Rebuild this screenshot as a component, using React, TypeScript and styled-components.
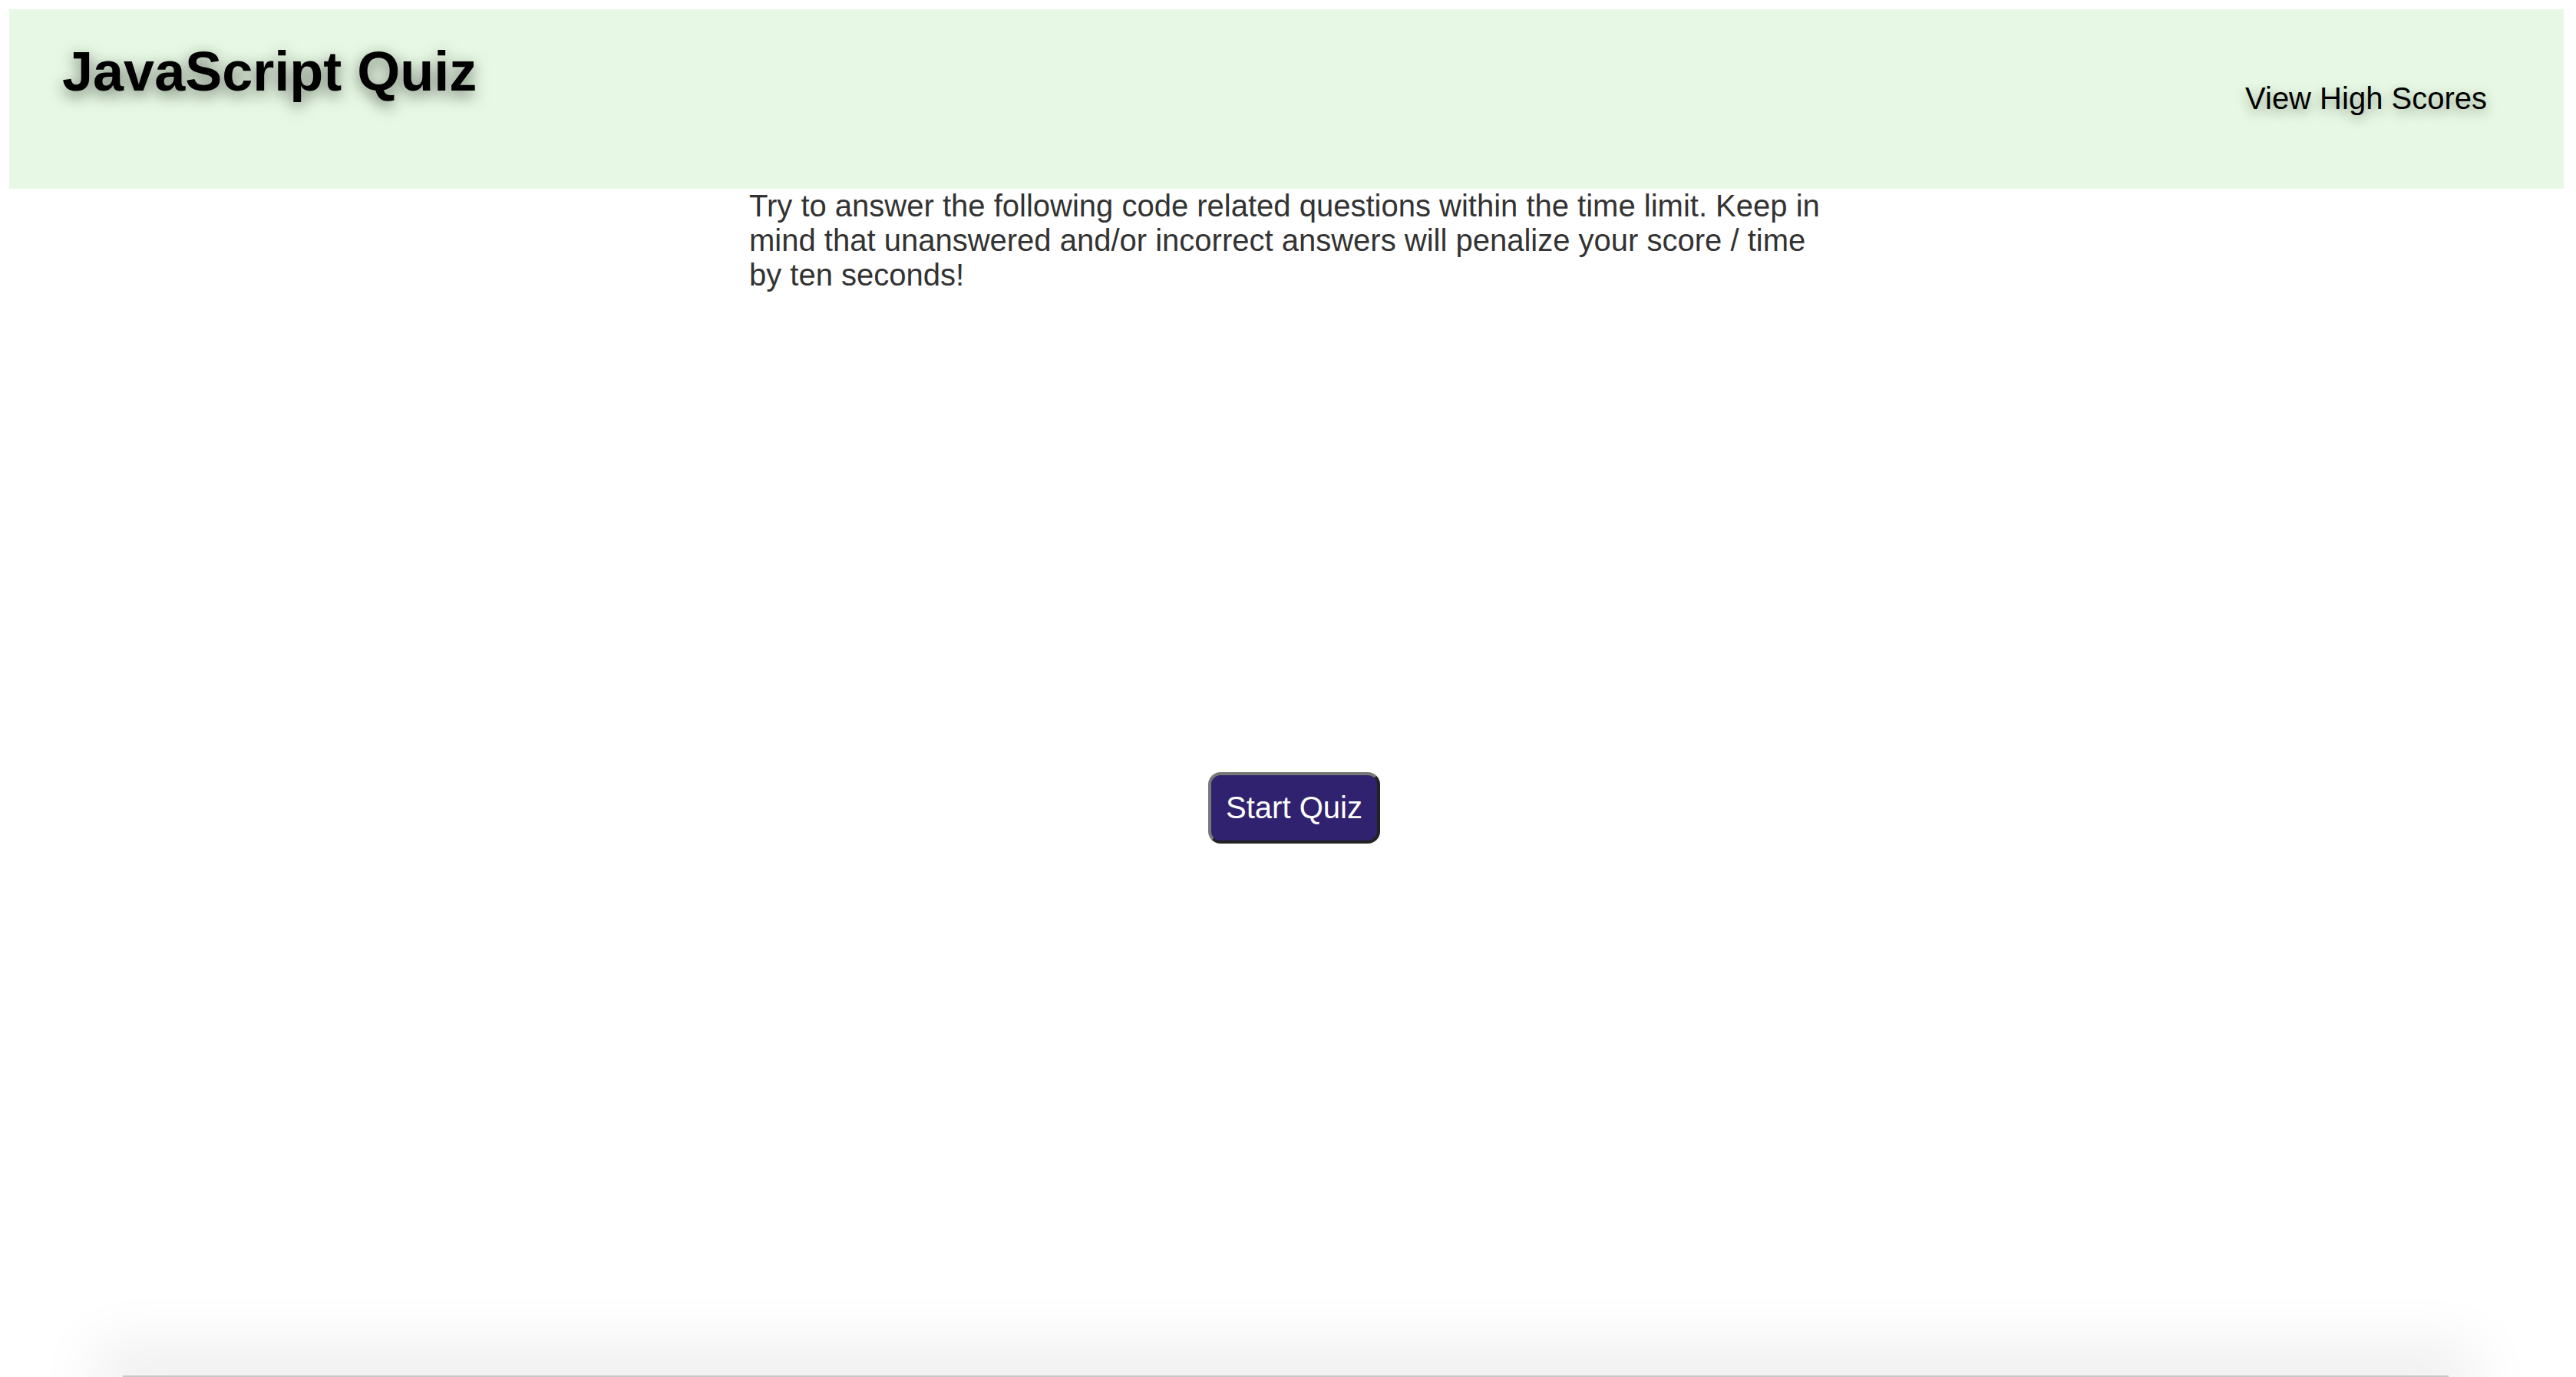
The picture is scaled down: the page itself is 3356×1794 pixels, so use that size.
import React from "react";
import styled, { createGlobalStyle } from "styled-components";

const GlobalStyle = createGlobalStyle`
  html, body {
    margin: 0;
    padding: 0;
    background: #ffffff;
  }
  body {
    font-family: "Liberation Sans", Arial, Helvetica, sans-serif;
    overflow: hidden;
  }
`;

const Page = styled.div`
  display: flex;
  flex-direction: column;
  min-height: 100vh;
`;

const Header = styled.header`
  display: flex;
  justify-content: space-between;
  align-items: flex-start;
  margin: 12px 16px 0 12px;
  height: 234px;
  box-sizing: border-box;
  padding: 40px 100px 0 69px;
  background: #e7f9e4;
`;

const Title = styled.h1`
  margin: 0;
  font-size: 72px;
  font-weight: 700;
  line-height: normal;
  color: #000;
  text-shadow: 0 6px 20px rgba(0, 0, 0, 0.55);
`;

const ScoresLink = styled.a`
  margin-top: 53px;
  font-size: 40px;
  line-height: 46px;
  color: #000;
  text-decoration: none;
  cursor: pointer;
  text-shadow: 0 5px 16px rgba(0, 0, 0, 0.4);
`;

const Main = styled.main`
  display: flex;
  flex-direction: column;
  align-items: center;
`;

const Intro = styled.p`
  width: 1400px;
  margin: 0 4px 0 0;
  font-size: 40px;
  line-height: 45px;
  color: #333;
`;

const StartButton = styled.button<{ $shift: number }>`
  margin-top: 625px;
  margin-left: ${(p) => p.$shift}px;
  padding: 19px 19px 20px;
  font-family: "Liberation Sans", Arial, Helvetica, sans-serif;
  font-size: 40px;
  line-height: 46px;
  color: #ffffff;
  background: #31226f;
  border-width: 4px;
  border-style: solid;
  border-color: #777777 #222222 #222222 #777777;
  border-radius: 16px;
  cursor: pointer;
`;

const Footer = styled.footer`
  margin: auto 166px 0 160px;
  height: 2px;
  background: #c8c8c8;
  box-shadow: 0 0 80px 36px rgba(0, 0, 0, 0.08);
`;

export default function App() {
  return (
    <>
      <GlobalStyle />
      <Page>
        <Header>
          <Title>JavaScript Quiz</Title>
          <ScoresLink>View High Scores</ScoresLink>
        </Header>
        <Main>
          <Intro>
            Try to answer the following code related questions within the time
            limit. Keep in mind that unanswered and/or incorrect answers will
            penalize your score / time by ten seconds!
          </Intro>
          <StartButton $shift={16}>Start Quiz</StartButton>
        </Main>
        <Footer />
      </Page>
    </>
  );
}
